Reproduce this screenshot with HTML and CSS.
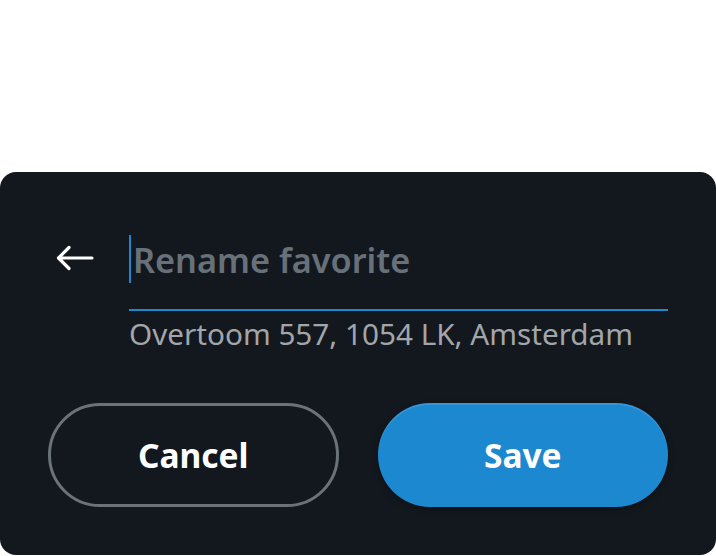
FILE: index.html
```html
<!DOCTYPE html>
<html>
<head>
<meta charset="utf-8">
<link rel="stylesheet" href="styles.css">
</head>
<body>
<div class="card">
  <div class="header">
    <button class="back" aria-label="Back">
      <svg width="38" height="26" viewBox="0 0 38 26" fill="none" stroke="#ffffff" stroke-width="3.2" stroke-linecap="round" stroke-linejoin="round">
        <path d="M36 13H3M13 2.5L2.5 13L13 23.5"/>
      </svg>
    </button>
    <div class="field">
      <div class="input">
        <span class="caret"></span>
        <span class="placeholder">Rename favorite</span>
      </div>
      <div class="underline"></div>
      <div class="address">Overtoom 557, 1054 LK, Amsterdam</div>
    </div>
  </div>
  <div class="actions">
    <button class="btn btn-cancel">Cancel</button>
    <button class="btn btn-save">Save</button>
  </div>
</div>
</body>
</html>
```

FILE: styles.css
```css
html, body {
  margin: 0;
  padding: 0;
  background: #ffffff;
}
body {
  font-family: "Noto Sans", "Open Sans", sans-serif;
  height: 556px;
  overflow: hidden;
}
.card {
  margin-top: 172px;
  height: 383px;
  box-sizing: border-box;
  background: #13181f;
  border-radius: 16px;
  padding: 63px 48px 0 48px;
  display: flex;
  flex-direction: column;
}
.header {
  display: flex;
  align-items: flex-start;
}
.back {
  width: 81px;
  flex: 0 0 81px;
  height: 48px;
  padding: 0 0 0 8px;
  margin: 0;
  border: 0;
  background: none;
  display: flex;
  align-items: center;
  justify-content: flex-start;
}
.back svg {
  display: block;
  margin-top: -2px;
}
.field {
  flex: 1;
  display: flex;
  flex-direction: column;
}
.input {
  height: 48px;
  display: flex;
  align-items: center;
}
.caret {
  width: 2px;
  height: 48px;
  background: #1b88d0;
  flex: 0 0 2px;
}
.placeholder {
  margin-left: 2px;
  font-size: 34.3px;
  font-weight: 600;
  color: #68717a;
  line-height: 48px;
  padding-top: 2px;
}
.underline {
  margin-top: 26px;
  height: 2px;
  background: #1b88d0;
}
.address {
  margin-top: 4px;
  font-size: 29.7px;
  line-height: 38px;
  color: #a2a6aa;
}
.actions {
  margin-top: 50px;
  display: grid;
  grid-template-columns: 1fr 1fr;
  gap: 39px;
}
.btn {
  box-sizing: border-box;
  height: 104px;
  border-radius: 52px;
  font-family: "Noto Sans", "Open Sans", sans-serif;
  font-size: 33.5px;
  font-weight: 700;
  color: #ffffff;
  cursor: pointer;
  padding: 0;
  margin: 0;
}
.btn-cancel {
  background: transparent;
  border: 3px solid #6b7279;
}
.btn-save {
  background: #1b88d0;
  border: 0;
  box-shadow: inset 0 2px 0 rgba(255,255,255,0.12), 0 2px 6px rgba(0,0,0,0.35);
}
```
